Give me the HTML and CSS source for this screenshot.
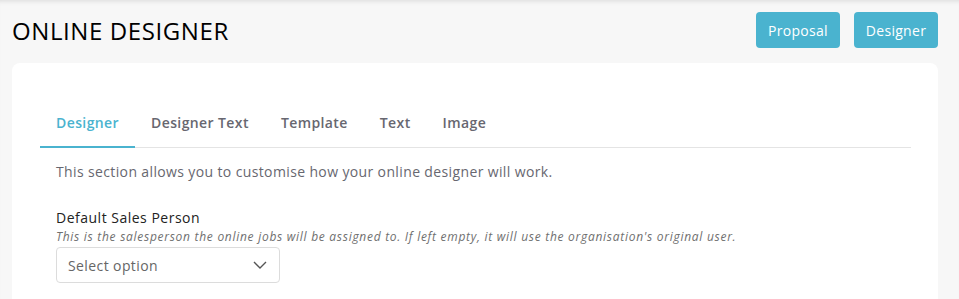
FILE: index.html
```html
<!DOCTYPE html>
<html>

<head>
    <meta charset="utf-8">
    <title>Online Designer</title>
    <meta name="viewport" content="width=device-width, initial-scale=1">
    <link rel="stylesheet" href="styles.css">
</head>

<body>
    <div class="page">
        <header class="page-header">
            <h1 class="page-title">ONLINE DESIGNER</h1>
            <div class="header-actions">
                <button class="btn">Proposal</button>
                <button class="btn">Designer</button>
            </div>
        </header>

        <div class="card">
            <nav class="tabs">
                <a class="tab active">Designer</a>
                <a class="tab">Designer Text</a>
                <a class="tab">Template</a>
                <a class="tab">Text</a>
                <a class="tab">Image</a>
            </nav>
            <div class="tab-body">
                <p class="intro">This section allows you to customise how your online designer will work.</p>
                <div class="field">
                    <label class="field-label">Default Sales Person</label>
                    <span class="field-hint">This is the salesperson the online jobs will be assigned to. If left empty, it will use the organisation's original user.</span>
                    <div class="select">
                        <span>Select option</span>
                        <svg width="14" height="8" viewBox="0 0 14 8">
                            <path d="M1 1l6 6 6-6" fill="none" stroke="#555" stroke-width="1.4"/>
                        </svg>
                    </div>
                </div>
            </div>
        </div>
    </div>
</body>

</html>
```

FILE: styles.css
```css
body {
    margin: 0;
    padding: 0;
    overflow: hidden;
    background-color: #f7f7f7;
    font-family: "Open Sans", sans-serif;
}

.page {
    padding: 12px 21px 0 12px;
    box-shadow: inset 0 5px 5px -4px rgba(0, 0, 0, 0.12);
    height: 299px;
    box-sizing: border-box;
    overflow: hidden;
}

.page-header {
    display: flex;
    justify-content: space-between;
    align-items: flex-start;
    height: 51px;
}

.page-title {
    margin: 2px 0 0;
    font-size: 24px;
    font-weight: 400;
    color: #000;
    letter-spacing: 0.6px;
}

.header-actions {
    display: flex;
    gap: 14px;
}

.btn {
    height: 36px;
    width: 84px;
    border: none;
    border-radius: 4px;
    background-color: #4ab3cf;
    color: white;
    font-family: inherit;
    font-size: 14px;
    font-weight: 500;
    letter-spacing: 0.3px;
}

.card {
    background-color: white;
    border-radius: 8px;
    padding: 40px 27px 0 28px;
    height: 280px;
    box-sizing: border-box;
}

.tabs {
    display: flex;
    border-bottom: 1px solid #e4e4e4;
}

.tab {
    padding: 10px 16px 14px;
    font-size: 14px;
    font-weight: 600;
    letter-spacing: 0.4px;
    color: #676770;
    border-bottom: 2px solid transparent;
    margin-bottom: -1px;
}

.tab.active {
    color: #4ab3cf;
    border-bottom-color: #4ab3cf;
}

.tab-body {
    padding: 0 16px;
}

.intro {
    margin: 14px 0 0;
    font-size: 14px;
    letter-spacing: 0.37px;
    color: #676770;
}

.field {
    display: flex;
    flex-direction: column;
    margin-top: 27px;
}

.field-label {
    font-size: 14px;
    font-weight: 500;
    letter-spacing: 0.5px;
    color: #222;
}

.field-hint {
    font-size: 12px;
    font-style: italic;
    letter-spacing: 0.72px;
    color: #6f6f6f;
    margin-top: 1px;
}

.select {
    display: flex;
    justify-content: space-between;
    align-items: center;
    width: 224px;
    height: 36px;
    box-sizing: border-box;
    margin-top: 2px;
    padding: 0 12px 0 11px;
    border: 1px solid #dcdcdc;
    border-radius: 4px;
    font-size: 14px;
    letter-spacing: 0.4px;
    color: #666;
}
```
